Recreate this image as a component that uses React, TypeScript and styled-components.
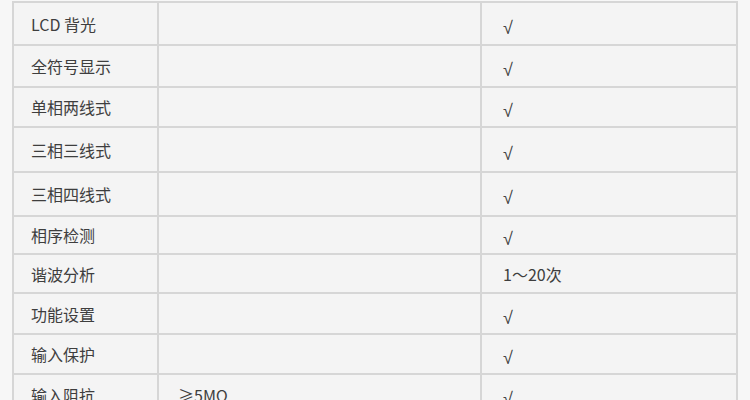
import React from "react";
import styled, { createGlobalStyle } from "styled-components";

const GlobalStyle = createGlobalStyle`
  html, body {
    margin: 0;
    padding: 0;
    background: #f7f7f7;
  }
  body {
    font-family: "Noto Sans CJK SC", "Noto Sans", sans-serif;
    overflow: hidden;
  }
`;

const Table = styled.div`
  margin: 1px 0 0 12px;
  width: 726px;
  display: flex;
  flex-direction: column;
  gap: 2px;
  padding: 2px;
  box-sizing: border-box;
  background: #d6d6d6;
`;

const Row = styled.div<{ $h: number }>`
  display: grid;
  grid-template-columns: 143px 321px 254px;
  gap: 2px;
  height: ${(p) => p.$h}px;
`;

const Cell = styled.div<{ $pad: number }>`
  background: #f4f4f4;
  display: flex;
  align-items: center;
  padding-left: ${(p) => p.$pad}px;
  font-size: 16px;
  color: #3e3e3e;
  white-space: nowrap;
  letter-spacing: 0;
`;

const Check = styled.span`
  display: inline-block;
  font-family: "Liberation Sans", Arial, sans-serif;
  font-size: 18px;
  line-height: 18px;
  margin-top: 8px;
  color: #444;
`;

type R = { name: string; mid: string; val: string; h: number };

const rows: R[] = [
  { name: "LCD 背光", mid: "", val: "√", h: 41 },
  { name: "全符号显示", mid: "", val: "√", h: 40 },
  { name: "单相两线式", mid: "", val: "√", h: 38 },
  { name: "三相三线式", mid: "", val: "√", h: 43 },
  { name: "三相四线式", mid: "", val: "√", h: 42 },
  { name: "相序检测", mid: "", val: "√", h: 36 },
  { name: "谐波分析", mid: "", val: "1～20次", h: 37 },
  { name: "功能设置", mid: "", val: "√", h: 39 },
  { name: "输入保护", mid: "", val: "√", h: 38 },
  { name: "输入阻抗", mid: "≥5MΩ", val: "√", h: 40 },
];

export default function App() {
  return (
    <>
      <GlobalStyle />
      <Table>
        {rows.map((r) => (
          <Row key={r.name} $h={r.h}>
            <Cell $pad={17}>{r.name}</Cell>
            <Cell $pad={19}>{r.mid}</Cell>
            <Cell $pad={21}>{r.val === "√" ? <Check>√</Check> : r.val}</Cell>
          </Row>
        ))}
      </Table>
    </>
  );
}
